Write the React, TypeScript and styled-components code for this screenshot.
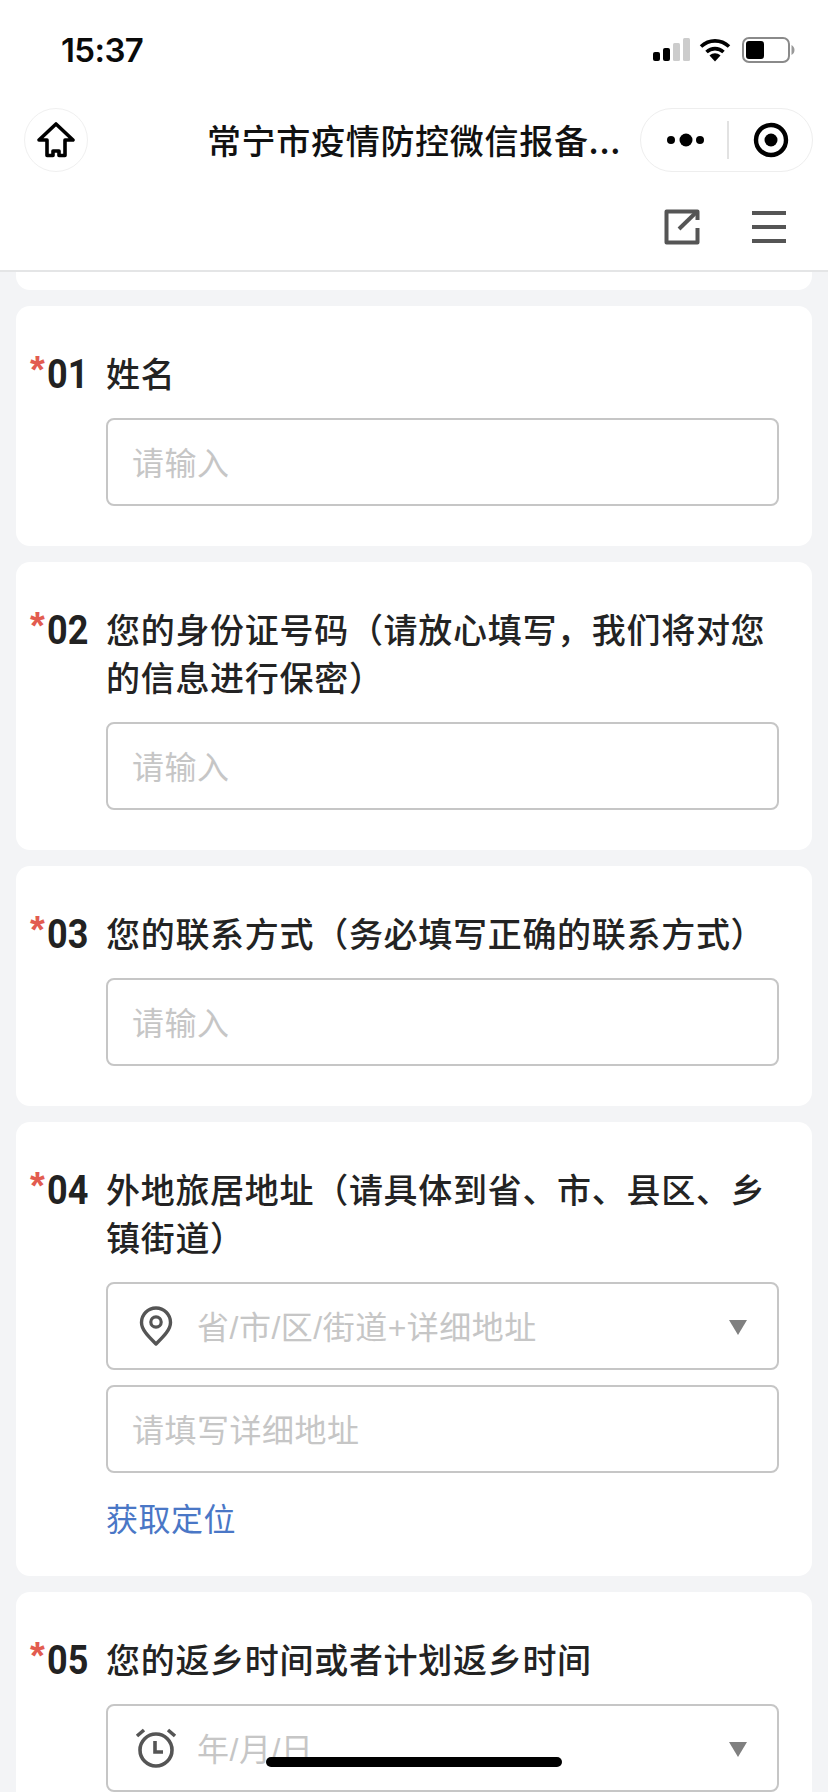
import React from "react";
import styled, { createGlobalStyle } from "styled-components";

const Global = createGlobalStyle`
  html, body { margin: 0; padding: 0; background: #f3f4f6; }
  body { font-family: "Noto Sans CJK SC", "Noto Sans", sans-serif; }
  * { box-sizing: border-box; }
`;

const Page = styled.div`
  position: relative;
  width: 828px;
  height: 1792px;
  overflow: hidden;
  background: #f3f4f6;
`;

const Header = styled.header`
  height: 272px;
  background: #fff;
  border-bottom: 2px solid #e4e5e6;
`;

const StatusBar = styled.div`
  height: 100px;
  padding: 0 33px 0 61px;
  display: flex;
  align-items: center;
  justify-content: space-between;
`;

const Time = styled.span`
  font-family: Inter, "Liberation Sans", sans-serif;
  font-weight: 600;
  font-size: 33px;
  letter-spacing: -0.6px;
  color: #0a0a0a;
`;

const StatusIcons = styled.div`
  display: flex;
  align-items: center;
`;

const NavBar = styled.div`
  margin-top: 8px;
  height: 64px;
  padding: 0 15px 0 24px;
  display: grid;
  grid-template-columns: 1fr auto 1fr;
  align-items: center;
`;

const HomeButton = styled.div`
  width: 64px;
  height: 64px;
  border-radius: 50%;
  border: 1px solid #f0f0f0;
  display: flex;
  align-items: center;
  justify-content: center;
`;

const NavTitle = styled.div`
  font-size: 34px;
  font-weight: 500;
  line-height: 64px;
  letter-spacing: 0.7px;
  margin-right: 9px;
  color: #111;
  white-space: nowrap;
`;

const Capsule = styled.div`
  justify-self: end;
  width: 173px;
  height: 64px;
  padding-left: 3px;
  border-radius: 32px;
  border: 1px solid #eeeeee;
  display: flex;
  align-items: center;
`;

const CapsuleSide = styled.div`
  flex: 1;
  display: flex;
  align-items: center;
  justify-content: center;
`;

const CapsuleDivider = styled.div`
  width: 2px;
  height: 38px;
  background: #e2e2e2;
`;

const ActionBar = styled.div`
  margin-top: 38px;
  height: 34px;
  padding-right: 41px;
  display: flex;
  justify-content: flex-end;
  align-items: center;
  gap: 51px;
`;

const Content = styled.main`
  padding: 0 16px;
  display: flex;
  flex-direction: column;
  gap: 16px;
`;

const PrevCardEnd = styled.div`
  height: 18px;
  background: #fff;
  border-radius: 0 0 14px 14px;
`;

const Card = styled.section`
  background: #fff;
  border-radius: 14px;
  padding: 43px 33px 40px 0;
  display: grid;
  grid-template-columns: 90px 1fr;
`;

const Index = styled.div`
  display: flex;
  align-items: flex-start;
  padding: 2px 0 0 14px;
`;

const Star = styled.span`
  width: 17px;
  font-family: "Liberation Sans", sans-serif;
  font-weight: 700;
  font-size: 38px;
  line-height: 38px;
  color: #e25c50;
`;

const Num = styled.span`
  font-family: Roboto, "Liberation Sans", sans-serif;
  font-weight: 700;
  font-size: 40px;
  line-height: 48px;
  color: #222;
  transform: scaleX(0.9);
  transform-origin: left center;
`;

const Body = styled.div`
  display: flex;
  flex-direction: column;
  min-width: 0;
`;

const Question = styled.div`
  font-size: 34px;
  font-weight: 500;
  line-height: 48px;
  letter-spacing: 0.7px;
  color: #232323;
  margin-bottom: 21px;
`;

const Field = styled.div<{ $spaced?: boolean }>`
  height: 88px;
  border: 2px solid #c6c6c6;
  border-radius: 8px;
  padding: 0 24px;
  display: flex;
  align-items: center;
  background: #fff;
  margin-top: ${(p) => (p.$spaced ? "15px" : "0")};
`;

const FieldIcon = styled.span`
  width: 48px;
  margin-right: 17px;
  display: flex;
  align-items: center;
  justify-content: center;
  flex: none;
`;

const Placeholder = styled.span`
  flex: 1;
  font-family: "Liberation Sans", "Noto Sans CJK SC", sans-serif;
  font-size: 32px;
  letter-spacing: 0.5px;
  line-height: 1;
  padding-top: 3px;
  color: #c6c6c6;
  white-space: nowrap;
`;

const Caret = styled.span`
  width: 0;
  height: 0;
  margin: 2px 6px 0 0;
  border-left: 9px solid transparent;
  border-right: 9px solid transparent;
  border-top: 15px solid #808080;
`;

const LocateLink = styled.a`
  margin: 20px 0 -5px;
  font-size: 32px;
  letter-spacing: 0.5px;
  line-height: 48px;
  color: #4a77c6;
`;

const HomeIndicator = styled.div`
  position: absolute;
  left: 266px;
  top: 1757px;
  width: 296px;
  height: 10px;
  border-radius: 5px;
  background: #000;
`;

const Signal = () => (
  <svg width="38" height="24" viewBox="0 0 38 24">
    <rect x="1" y="14" width="7" height="9" rx="2" fill="#000" />
    <rect x="11" y="10" width="7" height="13" rx="2" fill="#000" />
    <rect x="21" y="5" width="7" height="18" rx="1.5" fill="#cccccc" />
    <rect x="31" y="0" width="7" height="23" rx="1.5" fill="#cccccc" />
  </svg>
);

const Wifi = () => (
  <svg width="32" height="24" viewBox="0 0 32 24" style={{ margin: "0 11px 0 9px" }}>
    <path d="M2 8.5C10 1 22 1 30 8.5" fill="none" stroke="#000" strokeWidth="3.6" />
    <path d="M7.5 14C12.5 9.5 19.5 9.5 24.5 14" fill="none" stroke="#000" strokeWidth="3.6" />
    <path d="M10.5 17.5C14 14.5 18 14.5 21.5 17.5L16 23.5Z" fill="#000" />
  </svg>
);

const Battery = () => (
  <svg width="53" height="26" viewBox="0 0 53 26">
    <rect x="1" y="1" width="46" height="24" rx="6" fill="none" stroke="#8a8a8a" strokeWidth="2" />
    <rect x="4" y="4" width="18" height="18" rx="3" fill="#000" />
    <path d="M49.5 8C51.5 9 52.5 11 52.5 13C52.5 15 51.5 17 49.5 18Z" fill="#999" />
  </svg>
);

const HomeIcon = () => (
  <svg width="38" height="36" viewBox="0 0 38 36">
    <path
      d="M19 2L36 18H28V33.5H22V29H16V33.5H10V18H2Z"
      fill="none"
      stroke="#000"
      strokeWidth="3.6"
      strokeLinejoin="round"
    />
  </svg>
);

const Dots = () => (
  <svg width="40" height="16" viewBox="0 0 40 16">
    <circle cx="5" cy="8" r="4" fill="#000" />
    <circle cx="20" cy="8" r="6.5" fill="#000" />
    <circle cx="34" cy="8" r="4" fill="#000" />
  </svg>
);

const RecordIcon = () => (
  <svg width="36" height="36" viewBox="0 0 36 36">
    <circle cx="18" cy="18" r="15" fill="none" stroke="#000" strokeWidth="4.4" />
    <circle cx="18" cy="18" r="6.5" fill="#000" />
  </svg>
);

const ShareIcon = () => (
  <svg width="36" height="36" viewBox="0 0 36 36">
    <path
      d="M33.5 11V2.5H2.5V33.5H33.5V19"
      fill="none"
      stroke="#555"
      strokeWidth="4"
      strokeLinejoin="round"
    />
    <path d="M15 20L32 3.5" fill="none" stroke="#555" strokeWidth="4" />
  </svg>
);

const MenuIcon = () => (
  <svg width="36" height="34" viewBox="0 0 36 34">
    <rect x="1" y="1" width="34" height="4" fill="#555" />
    <rect x="1" y="15" width="34" height="4" fill="#555" />
    <rect x="1" y="29" width="34" height="4" fill="#555" />
  </svg>
);

const PinIcon = () => (
  <svg width="34" height="40" viewBox="0 0 34 40">
    <path
      d="M17 38C10 31 2.5 24 2.5 16.5C2.5 8.5 9 2 17 2C25 2 31.5 8.5 31.5 16.5C31.5 24 24 31 17 38Z"
      fill="none"
      stroke="#555"
      strokeWidth="3.4"
      strokeLinejoin="round"
    />
    <circle cx="17" cy="16" r="5.2" fill="none" stroke="#555" strokeWidth="3.2" />
  </svg>
);

const ClockIcon = () => (
  <svg width="42" height="40" viewBox="0 0 42 40">
    <circle cx="21" cy="22" r="16" fill="none" stroke="#555" strokeWidth="3.6" />
    <path d="M20 13V24H28" fill="none" stroke="#555" strokeWidth="3.6" />
    <path d="M2 8L9 2M40 8L33 2" fill="none" stroke="#555" strokeWidth="3.6" />
  </svg>
);

const Prefix = ({ no }: { no: string }) => (
  <Index>
    <Star>*</Star>
    <Num>{no}</Num>
  </Index>
);

export default function App() {
  return (
    <Page>
      <Global />
      <Header>
        <StatusBar>
          <Time>15:37</Time>
          <StatusIcons>
            <Signal />
            <Wifi />
            <Battery />
          </StatusIcons>
        </StatusBar>
        <NavBar>
          <HomeButton>
            <HomeIcon />
          </HomeButton>
          <NavTitle>常宁市疫情防控微信报备...</NavTitle>
          <Capsule>
            <CapsuleSide>
              <Dots />
            </CapsuleSide>
            <CapsuleDivider />
            <CapsuleSide>
              <RecordIcon />
            </CapsuleSide>
          </Capsule>
        </NavBar>
        <ActionBar>
          <ShareIcon />
          <MenuIcon />
        </ActionBar>
      </Header>
      <Content>
        <PrevCardEnd />
        <Card>
          <Prefix no="01" />
          <Body>
            <Question>姓名</Question>
            <Field>
              <Placeholder>请输入</Placeholder>
            </Field>
          </Body>
        </Card>
        <Card>
          <Prefix no="02" />
          <Body>
            <Question>您的身份证号码（请放心填写，我们将对您的信息进行保密）</Question>
            <Field>
              <Placeholder>请输入</Placeholder>
            </Field>
          </Body>
        </Card>
        <Card>
          <Prefix no="03" />
          <Body>
            <Question>您的联系方式（务必填写正确的联系方式）</Question>
            <Field>
              <Placeholder>请输入</Placeholder>
            </Field>
          </Body>
        </Card>
        <Card>
          <Prefix no="04" />
          <Body>
            <Question>外地旅居地址（请具体到省、市、县区、乡镇街道）</Question>
            <Field>
              <FieldIcon>
                <PinIcon />
              </FieldIcon>
              <Placeholder>省/市/区/街道+详细地址</Placeholder>
              <Caret />
            </Field>
            <Field $spaced>
              <Placeholder>请填写详细地址</Placeholder>
            </Field>
            <LocateLink>获取定位</LocateLink>
          </Body>
        </Card>
        <Card>
          <Prefix no="05" />
          <Body>
            <Question>您的返乡时间或者计划返乡时间</Question>
            <Field>
              <FieldIcon>
                <ClockIcon />
              </FieldIcon>
              <Placeholder>年/月/日</Placeholder>
              <Caret />
            </Field>
          </Body>
        </Card>
      </Content>
      <HomeIndicator />
    </Page>
  );
}
